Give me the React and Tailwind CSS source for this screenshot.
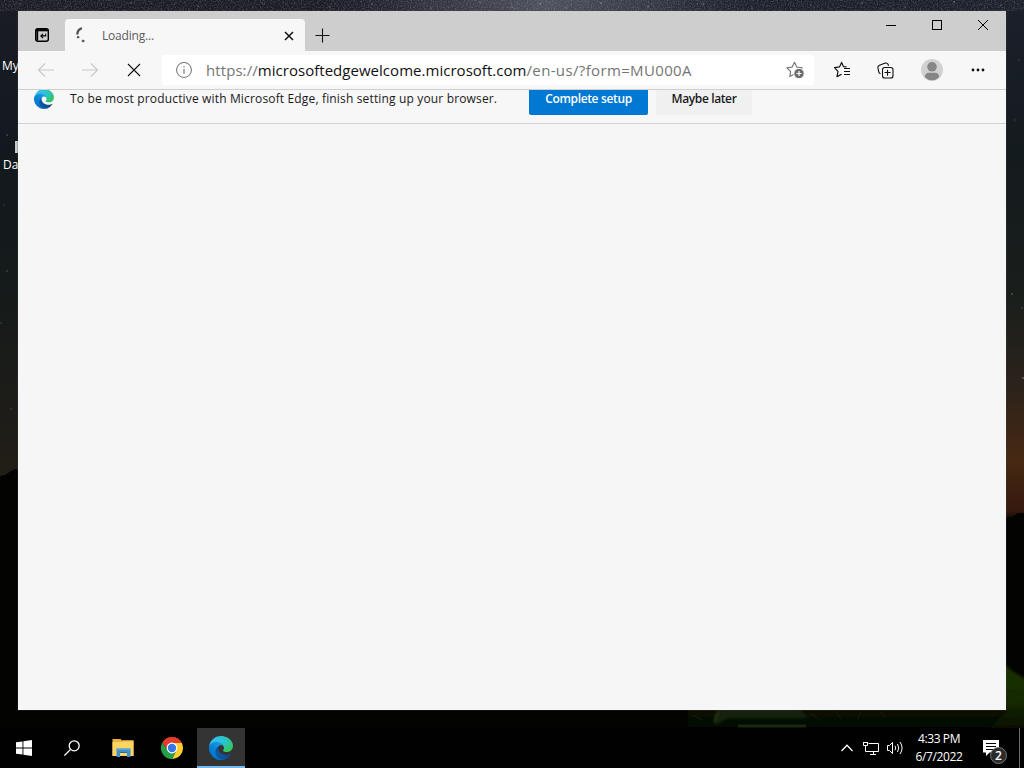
import React, { useId } from "react";

const stars = [
  [20, 4, 0.5], [66, 7, 0.4], [131, 3, 0.5], [198, 6, 0.5], [262, 3, 0.4],
  [330, 7, 0.5], [372, 4, 0.5], [431, 8, 0.5], [480, 3, 0.6], [512, 7, 0.6],
  [540, 4, 0.6], [566, 8, 0.6], [601, 3, 0.6], [648, 6, 0.6], [703, 4, 0.5],
  [752, 8, 0.5], [811, 5, 0.5], [862, 3, 0.5], [905, 7, 0.5], [954, 2, 0.6],
  [1001, 5, 0.5], [7, 135, 0.5], [4, 205, 0.2], [7, 271, 0.4], [1, 323, 0.3],
  [11, 409, 0.3], [1012, 294, 0.6], [1022, 308, 0.4], [1023, 378, 0.8],
  [1015, 120, 0.2], [1019, 60, 0.3],
];

const Wallpaper = () => (
  <svg className="absolute inset-0" width="1024" height="768" viewBox="0 0 1024 768">
    <defs>
      <linearGradient id="skyLeft" x1="0" y1="0" x2="0" y2="1">
        <stop offset="0" stopColor="#1b1c25" />
        <stop offset="0.2" stopColor="#12191e" />
        <stop offset="0.4" stopColor="#161b1a" />
        <stop offset="0.6" stopColor="#211d17" />
        <stop offset="1" stopColor="#211d17" />
      </linearGradient>
      <linearGradient id="skyRight" x1="0" y1="0" x2="0" y2="1">
        <stop offset="0" stopColor="#1b202b" />
        <stop offset="0.2" stopColor="#141b1e" />
        <stop offset="0.38" stopColor="#191e1b" />
        <stop offset="0.5" stopColor="#2b221b" />
        <stop offset="0.6" stopColor="#472813" />
        <stop offset="0.665" stopColor="#35190e" />
        <stop offset="0.68" stopColor="#080504" />
        <stop offset="1" stopColor="#000000" />
      </linearGradient>
      <radialGradient id="milkyWay" gradientUnits="userSpaceOnUse" cx="545" cy="0" r="230">
        <stop offset="0" stopColor="#6b6b78" stopOpacity="0.65" />
        <stop offset="0.5" stopColor="#4c4b5c" stopOpacity="0.5" />
        <stop offset="1" stopColor="#2b2b38" stopOpacity="0" />
      </radialGradient>
      <filter id="grain" x="0" y="0" width="1" height="1">
        <feTurbulence type="fractalNoise" baseFrequency="0.7" numOctaves="2" seed="4" />
        <feColorMatrix values="0 0 0 0 .6  0 0 0 0 .6  0 0 0 0 .7  1.6 0 0 0 -.7" />
      </filter>
      <filter id="soft" x="-0.2" y="-0.5" width="1.4" height="2">
        <feGaussianBlur stdDeviation="1.6" />
      </filter>
      <linearGradient id="grass" x1="0" y1="0" x2="0" y2="1">
        <stop offset="0" stopColor="#0a1305" />
        <stop offset="1" stopColor="#020402" />
      </linearGradient>
      <linearGradient id="hill" x1="0" y1="0" x2="0" y2="1">
        <stop offset="0" stopColor="#1b3205" />
        <stop offset="0.6" stopColor="#152a04" />
        <stop offset="1" stopColor="#070e02" />
      </linearGradient>
    </defs>
    <rect width="512" height="768" fill="url(#skyLeft)" />
    <rect x="512" width="512" height="768" fill="url(#skyRight)" />
    <rect width="1024" height="12" fill="url(#milkyWay)" />
    <rect width="1024" height="11" filter="url(#grain)" opacity="0.4" />
    {stars.map(([x, y, opacity]) => (
      <circle key={`${x}-${y}`} cx={x} cy={y} r="0.8" fill="#a9afb9" opacity={opacity} />
    ))}
    {/* ground */}
    <path d="M0 476 5 475 11 471 15 469 18 470V600H1006V518L1014 516 1018 513H1024V768H0z" fill="#030302" />
    {/* tent and lit grass */}
    <rect x="688" y="706" width="318" height="24" fill="url(#grass)" filter="url(#soft)" />
    <path d="M1000 660 1012 671 1026 679V728H990L1006 712z" fill="url(#hill)" filter="url(#soft)" />
    <path d="M714 726 721 709H800L808 718H728z" fill="#15230a" filter="url(#soft)" />
    <path d="M719 711 714 722" stroke="#2f4a19" strokeWidth="2" filter="url(#soft)" />
    <path d="M738 726H806" stroke="#1d2612" strokeWidth="3" />
    <path d="M692 715 703 720M810 713 820 720M836 711 841 719M857 720 861 712M880 712 886 717" stroke="#1c2813" opacity="0.6" />
  </svg>
);

const EdgeLogo = ({ size }) => {
  const id = useId();
  return (
    <svg className="shrink-0" width={size} height={size} viewBox="0 0 256 256">
      <defs>
        <linearGradient id={`${id}a`} x1="63" y1="178" x2="241" y2="178" gradientUnits="userSpaceOnUse">
          <stop offset="0" stopColor="#0c59a4" />
          <stop offset="1" stopColor="#114a8b" />
        </linearGradient>
        <linearGradient id={`${id}b`} x1="157" y1="100" x2="46" y2="222" gradientUnits="userSpaceOnUse">
          <stop offset="0" stopColor="#1b9de2" />
          <stop offset="0.16" stopColor="#1595df" />
          <stop offset="0.67" stopColor="#0680d7" />
          <stop offset="1" stopColor="#0078d4" />
        </linearGradient>
        <radialGradient
          id={`${id}c`}
          cx="113.37"
          cy="570.21"
          r="202.43"
          gradientTransform="matrix(-.04 1 2.13 .08 -1179.54 -106.69)"
          gradientUnits="userSpaceOnUse"
        >
          <stop offset="0" stopColor="#35c1f1" />
          <stop offset="0.23" stopColor="#2fc2df" />
          <stop offset="0.31" stopColor="#2bc3d2" />
          <stop offset="0.67" stopColor="#36c752" />
        </radialGradient>
      </defs>
      <g transform="translate(-4.63 -4.92)">
        <path
          fill={`url(#${id}a)`}
          d="M235.68 195.46a93.73 93.73 0 0 1-10.54 4.71 101.87 101.87 0 0 1-35.9 6.46c-47.32 0-88.54-32.55-88.54-74.32A31.48 31.48 0 0 1 117.13 105c-42.8 1.8-53.8 46.4-53.8 72.53 0 73.88 68.09 81.37 82.76 81.37 7.91 0 19.84-2.3 27-4.56l1.31-.44a128.34 128.34 0 0 0 66.6-52.8 4 4 0 0 0-5.32-5.64z"
        />
        <path
          fill={`url(#${id}b)`}
          d="M110.34 246.34A79.2 79.2 0 0 1 87.6 225a80.72 80.72 0 0 1 29.53-120c3.12-1.47 8.45-4.13 15.54-4a32.35 32.35 0 0 1 25.69 13 31.88 31.88 0 0 1 6.36 18.66c0-.21 24.46-79.6-80-79.6-43.9 0-80 41.66-80 78.21a130.15 130.15 0 0 0 12.11 56 128 128 0 0 0 156.38 67.11 75.55 75.55 0 0 1-62.78-8z"
        />
        <path
          fill={`url(#${id}c)`}
          d="M156.94 153.78c-.81 1.05-3.3 2.5-3.3 5.66 0 2.61 1.7 5.12 4.72 7.23 14.38 10 41.49 8.68 41.56 8.68a59.56 59.56 0 0 0 30.27-8.35 61.38 61.38 0 0 0 30.43-52.88c.26-22.41-8-37.31-11.34-43.91-21.19-41.45-66.93-65.29-116.67-65.29a128 128 0 0 0-128 126.2c.48-36.54 36.8-66.05 80-66.05 3.5 0 23.46.34 42 10.07 16.34 8.58 24.9 18.94 30.85 29.21 6.18 10.67 7.28 24.15 7.28 29.52s-2.74 13.33-7.8 19.91z"
        />
      </g>
    </svg>
  );
};

const TabStrip = () => (
  <div className="flex h-10 shrink-0 bg-[#cecece]">
    <button className="flex h-full w-[47px] items-center justify-center pt-2">
      <svg width="14" height="14" viewBox="0 0 14 14" fill="none" stroke="#000">
        <rect x="0.7" y="0.7" width="12.6" height="12.6" rx="2" strokeWidth="1.4" />
        <path d="M1 2.2H13" strokeWidth="2.2" />
        <path d="M2.3 2V12.5" strokeWidth="1.8" />
        <path d="M10.7 5.8V7.9H5.8M8 5.8 5.8 7.9 8 10.1" strokeWidth="1.1" />
      </svg>
    </button>
    <div className="mt-2 flex h-8 w-60 items-center rounded-t-[4px] bg-[#f7f7f7] pl-2.5 pr-[11px]">
      <svg width="16" height="16" viewBox="0 0 16 16" fill="none" stroke="#555" strokeLinecap="round">
        <path d="M6 1.6Q2.8 3 2.4 6.6" strokeWidth="2.4" strokeDasharray="1.6 0.4" />
        <circle cx="3" cy="10.2" r="0.9" fill="#555" strokeWidth="0.8" />
        <circle cx="8" cy="14" r="1" fill="#555" strokeWidth="0.8" />
      </svg>
      <span className="ml-[11px] flex-1 pt-px text-[12px] leading-4 tracking-[-0.2px] text-[#5c5c5c]">
        Loading...
      </span>
      <svg className="relative left-px top-px" width="12" height="12" viewBox="0 0 12 12" stroke="#111" strokeWidth="1.5">
        <path d="M2 2 10 10M10 2 2 10" />
      </svg>
    </div>
    <button className="flex h-full w-[35px] items-center justify-center pt-2">
      <svg width="15" height="15" viewBox="0 0 15 15" stroke="#111" strokeWidth="1.1">
        <path d="M7.5 0.5V14.5M0.5 7.5H14.5" />
      </svg>
    </button>
    <div className="ml-auto flex h-[29px]">
      <button className="flex w-[46px] items-center justify-center">
        <svg width="11" height="11" viewBox="0 0 11 11" stroke="#000">
          <path d="M0 5.5H10" />
        </svg>
      </button>
      <button className="flex w-[46px] items-center justify-center">
        <svg width="11" height="11" viewBox="0 0 11 11" stroke="#000" fill="none">
          <rect x="0.5" y="0.5" width="9" height="9" />
        </svg>
      </button>
      <button className="flex w-[46px] items-center justify-center">
        <svg width="11" height="11" viewBox="0 0 11 11" stroke="#000">
          <path d="M0 0 10 10M10 0 0 10" />
        </svg>
      </button>
    </div>
  </div>
);

const Toolbar = () => (
  <div className="flex h-[39px] shrink-0 items-center border-b border-[#cfcfcf] bg-[#f7f7f7] pl-1.5">
    <button className="flex w-11 justify-center">
      <svg width="18" height="16" viewBox="0 0 18 16" stroke="#c8c8c8" fill="none" strokeWidth="1.1">
        <path d="M17 8H1.5M8 1.5 1.5 8 8 14.5" />
      </svg>
    </button>
    <button className="flex w-11 justify-center">
      <svg width="18" height="16" viewBox="0 0 18 16" stroke="#c8c8c8" fill="none" strokeWidth="1.1">
        <path d="M1 8H16.5M10 1.5 16.5 8 10 14.5" />
      </svg>
    </button>
    <button className="flex w-11 justify-center">
      <svg width="14" height="14" viewBox="0 0 14 14" stroke="#111" strokeWidth="1.1">
        <path d="M1 1 13 13M13 1 1 13" />
      </svg>
    </button>
    <div className="ml-1.5 flex h-[30px] w-[652px] items-center rounded-[2px] bg-white pl-3.5 pr-[9px]">
      <svg width="16" height="16" viewBox="0 0 17 17" fill="none" stroke="#737373">
        <circle cx="8.5" cy="8.5" r="7.9" strokeWidth="1.1" />
        <path d="M8.5 7.3V12.5" strokeWidth="1.2" />
        <path d="M8.5 4.3V5.7" strokeWidth="1.3" />
      </svg>
      <span className="ml-3.5 flex-1 whitespace-nowrap text-[15px] leading-5 tracking-[0.08px] text-[#757575]">
        https://
        <span className="tracking-[0.03px] text-[#111]">microsoftedgewelcome.microsoft.com</span>
        <span className="tracking-[0.36px]">/en-us/?form=MU000A</span>
      </span>
      <svg width="19" height="18" viewBox="0 0 19 18" fill="none" stroke="#737373">
        <path
          d="M8.5 1.3 10.8 6.1 16.2 6.8 12.6 10.5 13 15 8.5 13.1 3.8 15.6 4.6 10.4 0.8 6.8 6.2 6.1z"
          strokeWidth="1.1"
          strokeLinejoin="round"
        />
        <circle cx="13" cy="12.5" r="5.2" fill="#6b6b6b" stroke="#fff" />
        <path d="M10.5 12.5H15.5M13 10V15" stroke="#fff" strokeWidth="1.2" />
      </svg>
    </div>
    <div className="ml-1.5 flex items-center">
      <button className="flex w-11 justify-center">
        <svg width="18" height="18" viewBox="0 0 18 18" fill="none" stroke="#111" strokeWidth="1.2" strokeLinejoin="round">
          <path d="M13.6 5.8 10.4 5.6 8.6 1.4 6.5 5.9 1.5 6.6 5 10.3 4 15.6 8.6 13.2" />
          <path d="M11 7.5H17M11 10.5H17M11 13.5H17" />
        </svg>
      </button>
      <button className="flex w-11 justify-center">
        <svg width="18" height="17" viewBox="0 0 18 17" fill="none" stroke="#111" strokeWidth="1.1">
          <path d="M3.5 11.8Q2.2 11.3 1.8 10L0.9 5.8Q0.6 4 2.5 3.2L8.3 1.1Q10.2 0.6 11 2.2L11.6 3.7" />
          <rect x="5.5" y="5.5" width="10.5" height="10.5" rx="2.3" />
          <path d="M10.5 7.8V13.8M7.5 10.5H13.6" />
        </svg>
      </button>
      <button className="flex w-12 justify-center">
        <svg width="22" height="22" viewBox="0 0 22 22">
          <circle cx="11" cy="11" r="11" fill="#d1d1d1" />
          <circle cx="11" cy="7.8" r="4.8" fill="#868686" />
          <path d="M3.8 18.2Q3.8 13.7 8 13.7H14Q18.2 13.7 18.2 18.2Q15 21.2 11 21.2Q7 21.2 3.8 18.2z" fill="#868686" />
        </svg>
      </button>
      <button className="flex w-11 justify-center">
        <svg width="14" height="4" viewBox="0 0 14 4" fill="#111">
          <circle cx="2" cy="2" r="1.4" />
          <circle cx="7" cy="2" r="1.4" />
          <circle cx="12" cy="2" r="1.4" />
        </svg>
      </button>
    </div>
  </div>
);

const SetupBar = () => (
  <div className="flex h-[34px] shrink-0 items-start overflow-hidden border-b border-[#d3d3d3] bg-[#f7f7f7] pl-4">
    <div className="-mt-px">
      <EdgeLogo size={20} />
    </div>
    <p className="ml-4 w-[459px] whitespace-nowrap text-[12px] leading-[18px] tracking-[0.155px] text-[#1a1a1a]">
      To be most productive with Microsoft Edge, finish setting up your browser.
    </p>
    <button className="h-[25px] w-[119px] rounded-b-[2px] bg-[#0078d4] pb-[7px] text-[12px] font-semibold leading-[18px] tracking-[-0.35px] text-white">
      Complete setup
    </button>
    <button className="ml-2 h-[25px] w-24 rounded-b-[2px] bg-[#f0f0f0] pb-[7px] text-[12px] font-semibold leading-[18px] tracking-[-0.38px] text-[#1a1a1a]">
      Maybe later
    </button>
  </div>
);

const BrowserWindow = () => (
  <div className="absolute left-[18px] top-[11px] flex h-[699px] w-[988px] flex-col bg-[#f6f6f6] shadow-[0_0_0_1px_rgba(70,70,70,0.25)]">
    <TabStrip />
    <Toolbar />
    <SetupBar />
    <div className="flex-1" />
  </div>
);

const Taskbar = () => (
  <div className="relative flex h-10 shrink-0 bg-[#010101] text-white">
    <button className="flex w-12 items-center justify-center">
      <svg width="16" height="16" viewBox="0 0 16 16" fill="#fff">
        <path d="M0 2.3 6.5 1.4V7.5H0zM7.4 1.2 16 0V7.5H7.4zM0 8.4H6.5V14.6L0 13.7zM7.4 8.4H16V16L7.4 14.8z" />
      </svg>
    </button>
    <button className="flex w-12 items-center justify-center">
      <svg width="16" height="16" viewBox="0 0 16 16" fill="none" stroke="#fff" strokeWidth="1.3">
        <circle cx="10.2" cy="5.8" r="5" />
        <path d="M6.6 9.4 0.4 15.6" />
      </svg>
    </button>
    <button className="ml-[3px] flex w-12 items-center justify-center">
      <svg width="22" height="18" viewBox="0 0 22 18">
        <path d="M0.5 0H8.5L10 1.5H21.5V17H0.5z" fill="#e9b43d" />
        <path d="M0.5 3H21.5V17H0.5z" fill="#fcd462" />
        <path d="M10.5 1.5H21.5V3H10z" fill="#f5c64c" />
        <path d="M4.5 9.5H18.5V18H15V13H8V18H4.5z" fill="#3f8fcd" />
        <path d="M4.5 9.5H18.5V11H4.5z" fill="#5aa8dd" />
        <path d="M8 13H15V14H8z" fill="#2a6ca6" />
      </svg>
    </button>
    <button className="ml-px flex w-12 items-center justify-center">
      <svg width="22" height="22" viewBox="0 0 22 22">
        <path d="M11 11 1.47 5.5A11 11 0 0 1 20.53 5.5z" fill="#e33b2e" />
        <path d="M11 6H20.8A11 11 0 0 1 11 22L15.33 13.5z" fill="#fdd02f" />
        <path d="M6.67 13.5 1.47 5.5A11 11 0 0 0 11 22L15.33 13.5 11 16z" fill="#25a04a" />
        <path d="M11 6H20.8A11 11 0 0 0 1.47 5.5L6.67 13.5z" fill="#e33b2e" />
        <circle cx="11" cy="11" r="5.4" fill="#fff" />
        <circle cx="11" cy="11" r="4.2" fill="#3578e5" />
      </svg>
    </button>
    <button className="ml-px flex w-12 items-center justify-center border-b-2 border-[#76b9ed] bg-[#343434] pt-0.5">
      <EdgeLogo size={24} />
    </button>
    <div className="ml-auto flex items-center">
      <svg width="12" height="8" viewBox="0 0 12 8" fill="none" stroke="#fff" strokeWidth="1.3">
        <path d="M0.5 7 6 1.3 11.5 7" />
      </svg>
      <svg className="ml-2.5" width="17" height="15" viewBox="0 0 17 15" fill="none" stroke="#fff">
        <path d="M5.5 2.5H15.5V10.5H4.5" />
        <path d="M10.5 10.5V13.5M7 13.5H13" />
        <path d="M0.5 1.5H4.5V4.5H0.5zM2.5 4.5V10.5H5" />
        <path d="M0 1.5H5" />
      </svg>
      <svg className="ml-[7px]" width="17" height="14" viewBox="0 0 17 14" fill="none" stroke="#fff">
        <path d="M0.5 4.5H2.5L5.5 1.5V12.5L2.5 9.5H0.5z" />
        <path d="M8 4.8Q9.5 7 8 9.2M10.5 3Q13 7 10.5 11M13 1Q17.2 7 13 13" />
      </svg>
      <div className="ml-2.5 w-[50px] text-center text-[12px] leading-[18px] tracking-[-0.4px]">
        <div className="whitespace-nowrap">4:33 PM</div>
        <div className="whitespace-nowrap">6/7/2022</div>
      </div>
      <div className="relative ml-[19px] h-4 w-4">
        <svg width="16" height="16" viewBox="0 0 16 16">
          <path d="M0 0H16V12.5H6.5L3 16V12.5H0z" fill="#fff" />
          <path d="M3 3.5H13M3 6.5H13M3 9.5H10" stroke="#000" />
        </svg>
        <span className="absolute left-[7px] top-[7px] flex h-[17px] w-[17px] items-center justify-center rounded-full border border-[#777] bg-[#2b2b2b] text-[12px] font-semibold leading-none">
          2
        </span>
      </div>
      <div className="ml-5 mr-1 h-10 w-px bg-[#6b6b6b]" />
    </div>
  </div>
);

const App = () => (
  <div className="relative flex h-[768px] w-[1024px] flex-col overflow-hidden bg-black font-['Open_Sans',sans-serif]">
    <Wallpaper />
    <div className="relative flex-1">
      {/* desktop shortcuts, mostly covered by the window */}
      <span className="absolute left-[2px] top-[58px] text-[12px] leading-4 text-white">My</span>
      <span className="absolute left-[15px] top-[141px] h-3 w-1 bg-[#c9c9c9]" />
      <span className="absolute left-[3px] top-[157px] text-[12px] leading-4 text-white">Da</span>
      <BrowserWindow />
    </div>
    <Taskbar />
  </div>
);

export default App;
